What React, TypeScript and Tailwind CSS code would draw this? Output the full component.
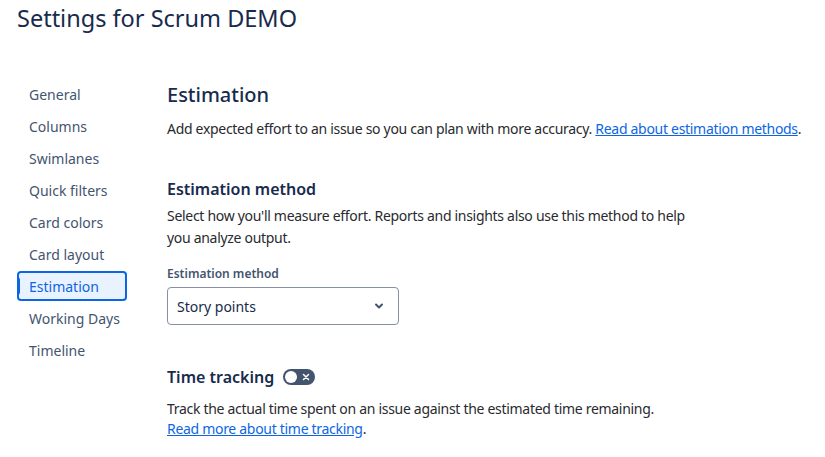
import React from 'react';

const navItems = [
  'General',
  'Columns',
  'Swimlanes',
  'Quick filters',
  'Card colors',
  'Card layout',
  'Estimation',
  'Working Days',
  'Timeline',
];

function Chevron() {
  return (
    <svg width="12" height="12" viewBox="0 0 12 12" className="text-[#44546f]">
      <path
        d="M3 4.5l3 3 3-3"
        fill="none"
        stroke="currentColor"
        strokeWidth="2"
        strokeLinecap="round"
        strokeLinejoin="round"
      />
    </svg>
  );
}

function Toggle() {
  return (
    <div className="relative w-[32px] h-[16px] rounded-full bg-[#44546f]">
      <span className="absolute left-[2px] top-[2px] w-[12px] h-[12px] rounded-full bg-white" />
      <svg
        width="8"
        height="8"
        viewBox="0 0 8 8"
        className="absolute right-[5px] top-[4px]"
      >
        <path d="M1.5 1.5l5 5M6.5 1.5l-5 5" stroke="white" strokeWidth="1.5" strokeLinecap="round" />
      </svg>
    </div>
  );
}

export default function App() {
  return (
    <div
      className="w-[825px] h-[457px] bg-white text-[#172b4d] overflow-hidden"
      style={{ fontFamily: '"Noto Sans", sans-serif' }}
    >
      <h1 className="pl-[17px] pt-[2px] text-[23.5px] leading-[32px] font-normal">
        Settings for Scrum DEMO
      </h1>

      <div className="flex pt-[44px]">
        <nav className="w-[167px] shrink-0 pl-[17px] flex flex-col">
          {navItems.map((item) =>
            item === 'Estimation' ? (
              <div
                key={item}
                className="relative h-[30px] my-[1px] w-[110px] flex items-center pl-[10px] text-[14px] text-[#0c66e4] bg-[#e9f2ff] border-2 border-[#0c66e4] rounded-[4px]"
              >
                <span className="absolute left-[-2px] top-[4px] w-[3px] h-[18px] bg-[#0c66e4] rounded-r" />
                {item}
              </div>
            ) : (
              <div key={item} className="h-[32px] flex items-center pl-[12px] text-[14px] text-[#44546f]">
                {item}
              </div>
            )
          )}
        </nav>

        <main className="flex flex-col">
          <h2 className="mt-[5px] text-[20px] leading-[24px] font-medium">Estimation</h2>
          <p className="mt-[12px] text-[14px] leading-[20px] text-[#292a2e] tracking-[-0.3px]">
            Add expected effort to an issue so you can plan with more accuracy.{' '}
            <a className="text-[#0c66e4] underline">Read about estimation methods</a>.
          </p>

          <h3 className="mt-[40px] text-[16px] leading-[20px] font-semibold">Estimation method</h3>
          <p className="mt-[6px] w-[530px] text-[14px] leading-[22px] text-[#292a2e] tracking-[-0.3px]">
            Select how you'll measure effort. Reports and insights also use this method to help you analyze output.
          </p>

          <label className="mt-[17px] text-[12px] leading-[16px] font-semibold text-[#44546f]">
            Estimation method
          </label>
          <div className="mt-[5px] w-[232px] h-[38px] flex items-center justify-between pl-[9px] pr-[13px] border border-[#8590a2] rounded-[4px]">
            <span className="text-[14px]">Story points</span>
            <Chevron />
          </div>

          <div className="mt-[42px] flex items-center gap-[9px]">
            <h3 className="text-[16px] leading-[20px] font-semibold">Time tracking</h3>
            <Toggle />
          </div>
          <p className="mt-[12px] text-[14px] leading-[20px] text-[#292a2e] tracking-[-0.3px]">
            Track the actual time spent on an issue against the estimated time remaining.
            <br />
            <a className="text-[#0c66e4] underline">Read more about time tracking</a>.
          </p>
        </main>
      </div>
    </div>
  );
}
